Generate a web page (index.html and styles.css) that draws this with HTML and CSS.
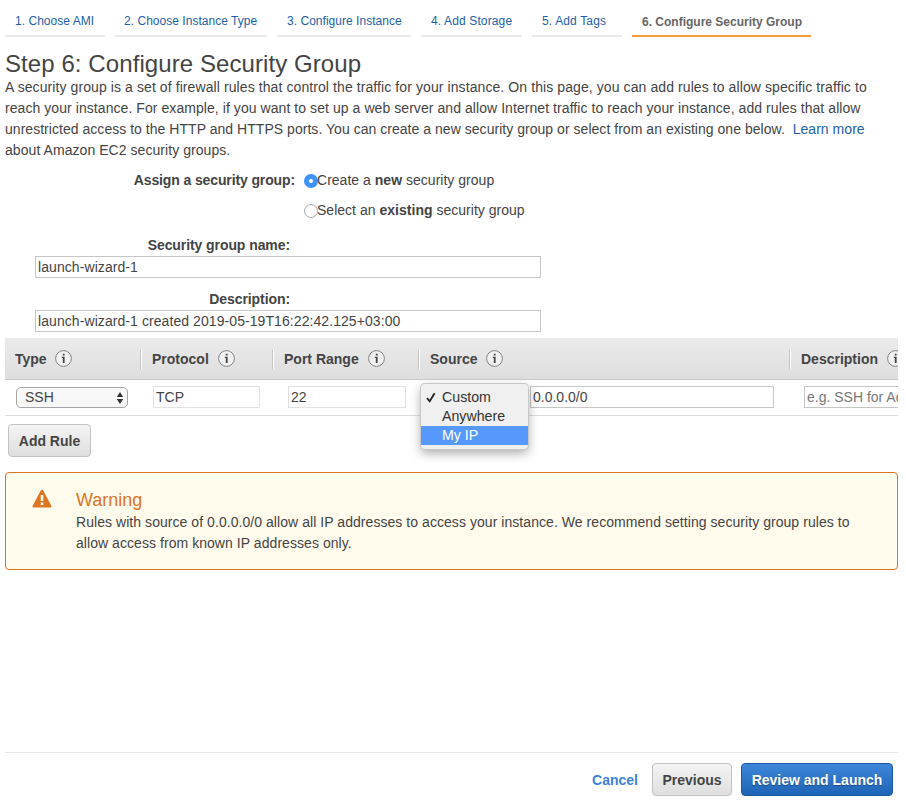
FILE: index.html
```html
<!DOCTYPE html>
<html lang="en">
<head>
<meta charset="utf-8">
<title>Step 6: Configure Security Group</title>
<link rel="stylesheet" href="styles.css">
</head>
<body>
<svg class="symbols" aria-hidden="true">
  <symbol id="info" viewBox="0 0 17 17">
    <circle cx="8.5" cy="8.5" r="7.9" fill="#f1f1f1" stroke="#808080" stroke-width="1"/>
    <path d="M7.800 3.700h1.800v1.800H7.800zM6.800 6.700h2.800v6.300H7.800V7.900h-1z" fill="#444"/>
  </symbol>
</svg>
<div class="page">
  <nav class="tabs">
    <a class="tab tab-ami"><span>1. Choose AMI</span></a>
    <a class="tab tab-type"><span>2. Choose Instance Type</span></a>
    <a class="tab tab-instance"><span>3. Configure Instance</span></a>
    <a class="tab tab-storage"><span>4. Add Storage</span></a>
    <a class="tab tab-tags"><span>5. Add Tags</span></a>
    <a class="tab tab-group active"><span>6. Configure Security Group</span></a>
  </nav>
  <h1>Step 6: Configure Security Group</h1>
  <p class="intro">
    <span class="l1">A security group is a set of firewall rules that control the traffic for your instance. On this page, you can add rules to allow specific traffic to</span><br>
    <span class="l2">reach your instance. For example, if you want to set up a web server and allow Internet traffic to reach your instance, add rules that allow</span><br>
    <span class="l3">unrestricted access to the HTTP and HTTPS ports. You can create a new security group or select from an existing one below. &nbsp;<a>Learn more</a></span><br>
    <span class="l4">about Amazon EC2 security groups.</span>
  </p>
  <div class="assign">
    <b class="assign-label">Assign a security group:</b>
    <div class="choices">
      <label class="choice"><i class="radio checked"></i><span>Create a <b>new</b> security group</span></label>
      <label class="choice"><i class="radio"></i><span>Select an <b>existing</b> security group</span></label>
    </div>
  </div>
  <div class="field"><b>Security group name:</b><div class="input wide">launch-wizard-1</div></div>
  <div class="field"><b>Description:</b><div class="input wide">launch-wizard-1 created 2019-05-19T16:22:42.125+03:00</div></div>

  <section class="rules">
    <div class="row head">
      <div class="th">Type<svg class="info"><use href="#info"/></svg></div>
      <div class="th">Protocol<svg class="info"><use href="#info"/></svg></div>
      <div class="th">Port Range<svg class="info"><use href="#info"/></svg></div>
      <div class="th">Source<svg class="info"><use href="#info"/></svg></div>
      <div class="th">Description<svg class="info"><use href="#info"/></svg></div>
    </div>
    <div class="row body">
      <div class="td td-type"><div class="select">SSH<svg viewBox="0 0 8 14"><path d="M.8 6 4 1l3.200 5zM.8 8h6.400L4 13z" fill="#333"/></svg></div></div>
      <div class="td td-protocol"><div class="input light">TCP</div></div>
      <div class="td td-port"><div class="input light">22</div></div>
      <div class="td td-source">
        <div class="input">0.0.0.0/0</div>
        <div class="menu">
          <div class="option"><svg class="check" viewBox="0 0 10 11"><path d="M1 6.200 3.700 9.300 8.600 1.300" fill="none" stroke="#222" stroke-width="1.800"/></svg>Custom</div>
          <div class="option">Anywhere</div>
          <div class="option selected">My IP</div>
        </div>
      </div>
      <div class="td td-desc"><div class="input hint">e.g. SSH for Ad</div></div>
    </div>
  </section>
  <div class="btn add">Add Rule</div>

  <section class="warning">
    <svg class="alert" viewBox="0 0 20 19"><path d="M10 .8Q10.800.8 11.200 1.600L19.300 16.800Q20 18.400 18.500 18.500H1.500Q0 18.400.7 16.800L8.800 1.600Q9.200.8 10 .8z" fill="#dd7522"/><path d="M8.700 6.100h2.600v6H8.700zM8.700 13.600h2.600v2.500H8.700z" fill="#fffbed"/></svg>
    <div>
      <h2>Warning</h2>
      <p class="advice">Rules with source of 0.0.0.0/0 allow all IP addresses to access your instance. We recommend setting security group rules to<br>allow access from known IP addresses only.</p>
    </div>
  </section>

  <footer>
    <a class="cancel">Cancel</a>
    <div class="btn previous">Previous</div>
    <div class="btn primary">Review and Launch</div>
  </footer>
</div>
</body>
</html>
```
FILE: styles.css
```css
* { box-sizing: border-box; }
body { margin: 0; background: #fff; color: #444; font: 14px/21px "Liberation Sans", Arial, sans-serif; }
h1, h2, p { margin: 0; font-weight: normal; }
.symbols { display: none; }
.page { height: 803px; padding-left: 5px; display: flex; flex-direction: column; overflow: hidden; white-space: nowrap; }

.tabs { display: flex; gap: 10px; height: 37px; flex: none; }
.tab { height: 37px; padding: 11px 0 0 10px; border-bottom: 2px solid #eaeaea; color: #1e5fa9; font-size: 12px; letter-spacing: .03px; }
.tab-ami { width: 100px; }
.tab-type { width: 152px; padding-left: 9px; }
.tab-instance { width: 134px; }
.tab-storage { width: 101px; letter-spacing: .13px; }
.tab-tags { width: 90px; letter-spacing: .15px; }
.tab-group { width: 179px; }
.tab.active { padding-top: 12px; border-color: #f59b38; color: #666; font-weight: bold; letter-spacing: 0; }

h1 { height: 40px; padding-top: 11px; font-size: 24px; line-height: 32px; letter-spacing: .08px; }
.intro { height: 84px; }
.l1 { letter-spacing: .09px; }
.l2 { letter-spacing: .065px; }
.l3 { letter-spacing: .035px; }
.l4 { letter-spacing: .06px; }
a { color: #1e5fa9; }

.assign { display: flex; margin-top: 9px; height: 60px; line-height: 20px; }
.assign-label { width: 290px; text-align: right; letter-spacing: -.12px; }
.choices { margin-left: 9px; letter-spacing: .02px; }
.choice { display: flex; height: 30px; }
.radio { width: 14px; height: 14px; margin-top: 4px; margin-right: -1px; border: 1px solid #aaa; border-radius: 50%; background: #fff; flex: none; }
.radio.checked { border: 5px solid #3f93f8; }

.field { height: 54px; padding-top: 5px; flex: none; }
.field b { display: block; width: 285px; height: 21px; text-align: right; letter-spacing: -.08px; }
.input { height: 22px; padding-left: 2px; border: 1px solid #c6c6c6; line-height: 20px; overflow: hidden; background: #fff; }
.wide { width: 506px; margin-left: 30px; letter-spacing: .075px; }

.rules { width: 893px; flex: none; }
.row { display: grid; grid-template-columns: 135px 132px 146px 371px 109px; }
.head { height: 42px; align-items: center; border-bottom: 1px solid #c9c9c9; background: linear-gradient(#ebebeb, #dedede); font-weight: bold; overflow: hidden; }
.th { display: flex; align-items: center; height: 20px; margin-left: 1px; padding: 1px 0 0 10px; border-left: 1px solid #fff; box-shadow: -1px 0 #c4c4c4; }
.th:first-child { margin-left: 0; border: 0; box-shadow: none; }
.info { width: 17px; height: 17px; margin: -1px 0 0 9px; flex: none; }
.th:first-child .info { margin-left: 8px; }
.body { height: 36px; border-bottom: 1px solid #ddd; }
.td { padding-top: 6px; min-width: 0; }
.td-type { padding-left: 11px; }
.td-protocol { padding-left: 13px; padding-right: 12px; }
.td-port { padding-left: 16px; padding-right: 12px; }
.td-source { position: relative; padding-left: 112px; padding-right: 15px; }
.td-desc { padding-left: 15px; }
.light { border-color: #e2e2e2; }
.hint { color: #777; border-right: 0; }
.select { display: flex; justify-content: space-between; align-items: center; width: 112px; height: 21px; margin-top: 1px; padding: 0 3px 0 8px; border: 1px solid #a5a5a5; border-radius: 5px; background: #f8f8f8; line-height: 17px; }
.select svg { width: 8px; height: 14px; }
.menu { position: absolute; left: 3px; top: 4px; width: 107px; height: 65px; padding: 4px 0; border-radius: 4px; background: #f0f0f0; box-shadow: 0 0 0 1px #c8c8c8, 0 4px 11px rgba(0, 0, 0, .35); }
.option { position: relative; height: 19px; padding-left: 21px; line-height: 19px; color: #333; font-size: 14.2px; }
.option.selected { background: #5698fb; color: #fff; }
.check { position: absolute; left: 5px; top: 4px; width: 10px; height: 11px; }

.btn { height: 33px; border: 1px solid #c2c2c2; border-radius: 4px; background: linear-gradient(#f4f4f4, #dedede); font-weight: bold; line-height: 32px; text-align: center; }
.add { width: 83px; margin: 8px 0 0 3px; flex: none; }

.warning { display: flex; width: 893px; height: 98px; margin-top: 15px; border: 1px solid #dd7522; border-radius: 4px; background: #fffbed; flex: none; }
.alert { width: 20px; height: 19px; margin: 16px 24px 0 26px; flex: none; }
h2 { padding-top: 16px; height: 39px; color: #dd7522; font-size: 18px; line-height: 22px; }
.advice { letter-spacing: .055px; }

footer { display: flex; justify-content: flex-end; width: 893px; height: 51px; margin-top: auto; padding: 10px 5px 0 0; border-top: 1px solid #e6e6e6; flex: none; }
.cancel { margin-right: 14px; color: #3d80d8; font-weight: bold; line-height: 34px; }
.previous { width: 80px; margin-right: 9px; }
.primary { width: 152px; border-color: #1c58a4; background: linear-gradient(#3d86d9, #1e64b6); color: #fff; text-shadow: 0 1px 1px rgba(0, 0, 0, .35); }
```
